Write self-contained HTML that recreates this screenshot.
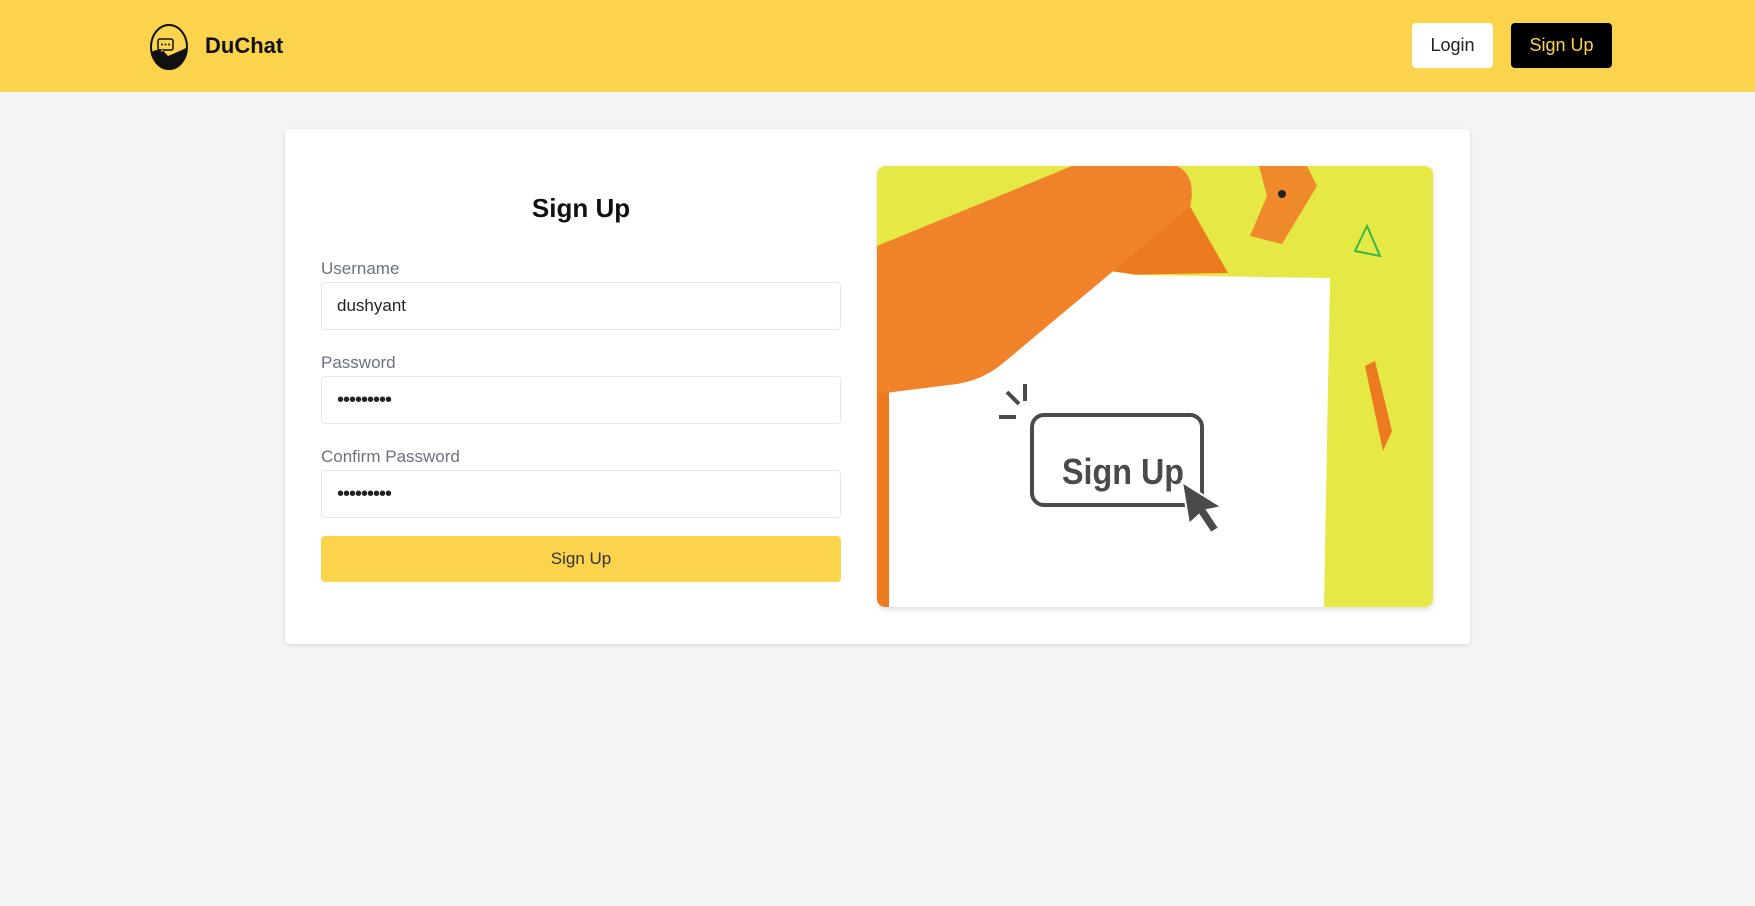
<!DOCTYPE html>
<html><head><meta charset="utf-8"><style>
*{box-sizing:border-box;margin:0;padding:0}
body{width:1755px;height:906px;background:#f3f4f6;font-family:"Liberation Sans",sans-serif;position:relative;overflow:hidden}
.hdr{position:absolute;left:0;top:0;width:1755px;height:92px;background:#fcd34d}
.brand{position:absolute;left:205px;top:33px;font-size:22px;font-weight:bold;color:#111}
.btn{position:absolute;top:23px;height:45px;border-radius:4px;font-size:18px;display:flex;align-items:center;justify-content:center}
.card{position:absolute;left:285px;top:129px;width:1185px;height:515px;background:#fff;border-radius:4px;box-shadow:0 1px 4px rgba(0,0,0,.12)}
.lbl{position:absolute;left:321px;font-size:17px;color:#6b7280}
.inp{position:absolute;left:321px;width:520px;height:48px;border:1px solid #e5e7eb;border-radius:4px;font-size:17px;color:#222;padding-left:15px;display:flex;align-items:center}
.dots{font-size:20px;letter-spacing:-1px}
</style></head><body>
<div class="hdr">
<svg style="position:absolute;left:148px;top:22px" width="42" height="50" viewBox="0 0 42 50">
<ellipse cx="21" cy="25" rx="18" ry="22" fill="#fcd34d" stroke="#111" stroke-width="2"/>
<path d="M4 30 Q12 24 20 34 Q30 30 38 26 Q38 44 21 47 Q6 45 4 30Z" fill="#111"/>
<rect x="10" y="17" width="15" height="11" rx="2" fill="#fcd34d" stroke="#111" stroke-width="1.5"/>
<path d="M13 28 L12 32 L17 28" fill="#fcd34d" stroke="#111" stroke-width="1.2"/>
<circle cx="14" cy="22.5" r="1" fill="#111"/><circle cx="17.5" cy="22.5" r="1" fill="#111"/><circle cx="21" cy="22.5" r="1" fill="#111"/>
</svg>
<div class="brand">DuChat</div>
<div class="btn" style="left:1412px;width:81px;background:#fff;color:#222">Login</div>
<div class="btn" style="left:1511px;width:101px;background:#000;color:#fcd34d">Sign Up</div>
</div>
<div class="card"></div>
<div style="position:absolute;left:321px;width:520px;top:193px;text-align:center;font-size:26px;font-weight:bold;color:#111">Sign Up</div>
<div class="lbl" style="top:259px">Username</div>
<div class="inp" style="top:282px">dushyant</div>
<div class="lbl" style="top:353px">Password</div>
<div class="inp dots" style="top:376px">•••••••••</div>
<div class="lbl" style="top:447px">Confirm Password</div>
<div class="inp dots" style="top:470px">•••••••••</div>
<div style="position:absolute;left:321px;top:536px;width:520px;height:46px;background:#fcd34d;border-radius:4px;font-size:17px;color:#333;display:flex;align-items:center;justify-content:center">Sign Up</div>
<svg style="position:absolute;left:877px;top:166px;border-radius:8px;box-shadow:0 2px 6px rgba(0,0,0,.15)" width="556" height="441" viewBox="0 0 556 441">
<defs><clipPath id="c"><rect width="556" height="441" rx="8"/></clipPath></defs>
<g clip-path="url(#c)">
<rect width="556" height="441" fill="#e6e845"/>
<path d="M290 0 L351 107 L240 109 L200 130 L250 0Z" fill="#ec7a1f"/>
<rect x="0" y="200" width="12" height="241" fill="#ec7a1f"/>
<path d="M200 100 L260 109 L453 112 L447 441 L12 441 L12 227 L60 200 Z" fill="#fff"/>
<path d="M0 80 L195 0 L300 0 Q320 10 313 41 L125 198 Q105 214 80 218 L0 228Z" fill="#f0832a"/>
<path d="M382 0 L430 0 L440 20 L405 78 L373 70 L390 30Z" fill="#ee8a2a"/>
<circle cx="405" cy="28" r="4" fill="#222"/>
<path d="M490 60 L478 85 L503 90Z" fill="none" stroke="#39b54a" stroke-width="2"/>
<path d="M488 200 L498 195 L515 265 L506 285Z" fill="#ec7a1f"/>
<rect x="155" y="249" width="170" height="90" rx="12" fill="none" stroke="#4a4a4a" stroke-width="4"/>
<path d="M130 226 L142 238 M148 218 L148 235 M122 251 L139 251" stroke="#4a4a4a" stroke-width="4"/>
<text x="185" y="318" font-family="Liberation Sans,sans-serif" font-weight="bold" font-size="36" fill="#4a4a4a" textLength="122" lengthAdjust="spacingAndGlyphs">Sign Up</text>
<path d="M305 316 L345 341 L330 344 L342 362 L334 367 L322 349 L312 358Z" fill="#4a4a4a" stroke="#fff" stroke-width="2"/>
</g></svg>
</body></html>
